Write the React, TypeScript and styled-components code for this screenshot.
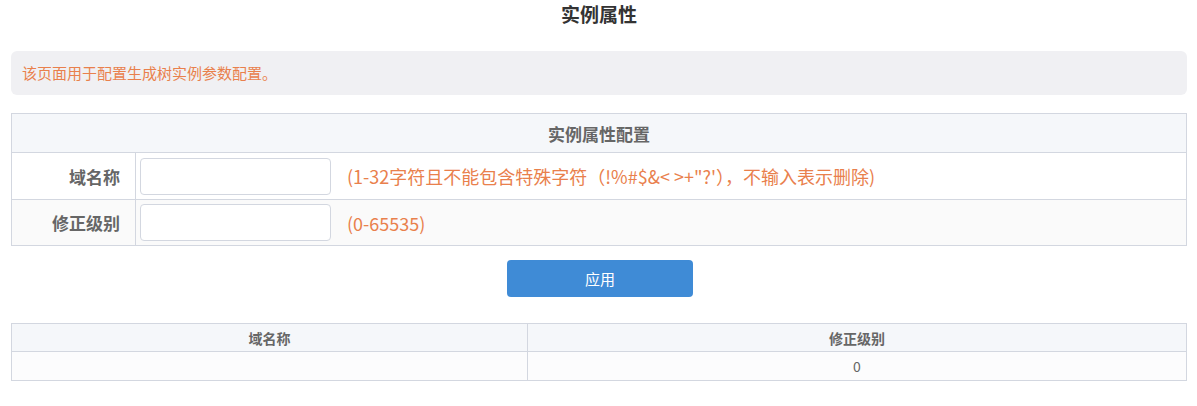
import styled, { createGlobalStyle } from "styled-components";

const GlobalStyle = createGlobalStyle`
  body {
    margin: 0;
    background: #fff;
    font-family: "Noto Sans CJK SC", "Microsoft YaHei", sans-serif;
  }
`;

const Page = styled.div`
  padding: 0 10px 0 11px;
`;

const Title = styled.h2`
  margin: 0;
  height: 28px;
  line-height: 28px;
  text-align: center;
  font-size: 19px;
  font-weight: bold;
  color: #333;
`;

const Notice = styled.div`
  margin-top: 23px;
  height: 44px;
  line-height: 44px;
  padding-left: 11px;
  background-color: #f0f0f3;
  border-radius: 6px;
  color: #e9804c;
  font-size: 15px;
`;

const ConfigTable = styled.table`
  width: 100%;
  margin-top: 18px;
  border-collapse: collapse;
  border: 1px solid #d3d7e0;
  td,
  th {
    border: 1px solid #d3d7e0;
    padding: 0;
  }
`;

const HeadCell = styled.th`
  height: 38px;
  background-color: #f5f7fa;
  color: #666;
  font-size: 17px;
  font-weight: bold;
`;

const Row = styled.tr<{ $alt?: boolean }>`
  background-color: ${(p) => (p.$alt ? "#fafafa" : "#fff")};
  height: ${(p) => (p.$alt ? "46px" : "47px")};
`;

const Label = styled.td`
  width: 108px;
  padding-right: 15px !important;
  text-align: right;
  color: #666;
  font-size: 17px;
  font-weight: bold;
`;

const FieldCell = styled.td`
  padding-left: 4px !important;
`;

const Field = styled.div`
  display: flex;
  align-items: center;
  gap: 16px;
`;

const Input = styled.input`
  box-sizing: border-box;
  width: 191px;
  height: 37px;
  border: 1px solid #d3d7e0;
  border-radius: 4px;
  background: #fff;
  outline: none;
`;

const Hint = styled.span`
  color: #e9804c;
  font-size: 18px;
`;

const Actions = styled.div`
  display: flex;
  justify-content: center;
  margin-top: 14px;
`;

const Button = styled.button`
  width: 186px;
  height: 37px;
  margin-left: 2px;
  border: none;
  border-radius: 4px;
  background-color: #3f8bd6;
  color: #fff;
  font-family: inherit;
  font-size: 15px;
`;

const ListTable = styled.table`
  width: 100%;
  margin-top: 26px;
  border-collapse: collapse;
  border: 1px solid #d3d7e0;
  font-size: 14px;
  color: #666;
  td,
  th {
    border: 1px solid #d3d7e0;
    padding: 0;
    text-align: center;
  }
`;

const ListHead = styled.th<{ $w?: string }>`
  height: 27px;
  width: ${(p) => p.$w ?? "auto"};
  background-color: #f5f7fa;
  font-weight: 600;
`;

const ListCell = styled.td`
  height: 28px;
  background-color: #fcfcfd;
`;

export default function App() {
  return (
    <Page>
      <GlobalStyle />
      <Title>实例属性</Title>
      <Notice>该页面用于配置生成树实例参数配置。</Notice>
      <ConfigTable>
        <thead>
          <tr>
            <HeadCell colSpan={2}>实例属性配置</HeadCell>
          </tr>
        </thead>
        <tbody>
          <Row>
            <Label>域名称</Label>
            <FieldCell>
              <Field>
                <Input />
                <Hint>(1-32字符且不能包含特殊字符（!%#$&amp;&lt; &gt;+"?'），不输入表示删除)</Hint>
              </Field>
            </FieldCell>
          </Row>
          <Row $alt>
            <Label>修正级别</Label>
            <FieldCell>
              <Field>
                <Input />
                <Hint>(0-65535)</Hint>
              </Field>
            </FieldCell>
          </Row>
        </tbody>
      </ConfigTable>
      <Actions>
        <Button>应用</Button>
      </Actions>
      <ListTable>
        <thead>
          <tr>
            <ListHead $w="515px">域名称</ListHead>
            <ListHead>修正级别</ListHead>
          </tr>
        </thead>
        <tbody>
          <tr>
            <ListCell></ListCell>
            <ListCell>0</ListCell>
          </tr>
        </tbody>
      </ListTable>
    </Page>
  );
}
